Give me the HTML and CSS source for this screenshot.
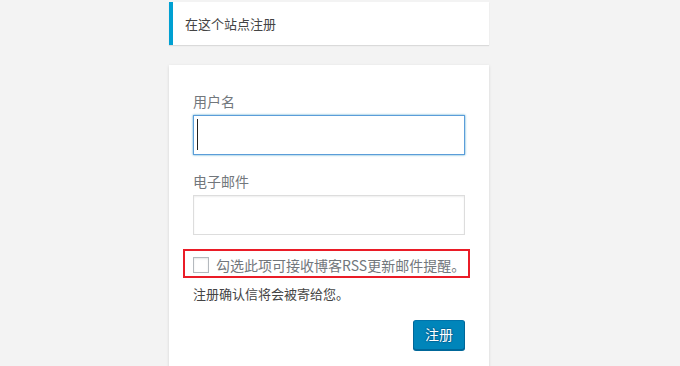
FILE: index.html
```html
<!DOCTYPE html>
<html lang="zh-CN">
<head>
<meta charset="utf-8">
<title>注册</title>
<link rel="stylesheet" href="styles.css">
</head>
<body>
<div class="login">
  <p class="message">在这个站点注册</p>
  <form class="register-form" action="#" onsubmit="return false">
    <div class="field">
      <label class="field-label" for="user_login">用户名</label>
      <div class="input-wrap">
        <input type="text" id="user_login" class="input input-focus">
        <span class="caret"></span>
      </div>
    </div>
    <div class="field">
      <label class="field-label" for="user_email">电子邮件</label>
      <div class="input-wrap">
        <input type="email" id="user_email" class="input">
      </div>
    </div>
    <div class="subscribe">
      <span class="check"></span>
      <span class="subscribe-text">勾选此项可接收博客RSS更新邮件提醒。</span>
      <span class="highlight"></span>
    </div>
    <p class="passmail">注册确认信将会被寄给您。</p>
    <div class="submit">
      <button type="button" class="button">注册</button>
    </div>
  </form>
</div>
</body>
</html>
```

FILE: styles.css
```css
* { box-sizing: border-box; }

body {
  margin: 0;
  background: #f3f3f3;
  font-family: "Noto Sans CJK SC", "Noto Sans", sans-serif;
  color: #444;
}

.login {
  width: 320px;
  margin-left: 169px;
  padding-top: 2px;
}

.message {
  margin: 0;
  padding: 12px;
  background: #fff;
  border-left: 4px solid #00a0d2;
  box-shadow: 0 1px 1px 0 rgba(0, 0, 0, 0.1);
  font-size: 13px;
  line-height: 19px;
  color: #444;
}

.register-form {
  margin: 20px 0 0;
  padding: 26px 24px 46px;
  background: #fff;
  box-shadow: 0 1px 3px rgba(0, 0, 0, 0.13);
}

.field {
  margin-bottom: 16px;
}

.field-label {
  display: block;
  font-size: 14px;
  line-height: 21px;
  color: #72777c;
}

.input-wrap {
  position: relative;
  margin-top: 3px;
}

.input {
  display: block;
  width: 100%;
  height: 40px;
  margin: 0;
  padding: 3px;
  font-size: 24px;
  border: 1px solid #ddd;
  background: #fff;
  box-shadow: inset 0 1px 2px rgba(0, 0, 0, 0.07);
  outline: none;
  color: #32373c;
  font-family: inherit;
}

.input-focus {
  border-color: #5b9dd9;
  background: #fff;
  box-shadow: 0 0 2px rgba(30, 140, 190, 0.8);
}

.caret {
  position: absolute;
  left: 4px;
  top: 4px;
  width: 1px;
  height: 31px;
  background: #222;
}

.subscribe {
  position: relative;
  display: flex;
  align-items: center;
  height: 28px;
}

.check {
  width: 16px;
  height: 16px;
  margin-right: 7px;
  border: 1px solid #b4b9be;
  background: #fff;
  box-shadow: inset 0 1px 2px rgba(0, 0, 0, 0.1);
  flex: none;
}

.subscribe-text {
  font-size: 14px;
  line-height: 20px;
  color: #72777c;
  white-space: nowrap;
}

.highlight {
  position: absolute;
  left: -10px;
  right: -5px;
  top: -2px;
  bottom: 1px;
  border: 2px solid #ea1c27;
  pointer-events: none;
}

.passmail {
  margin: 5px 0 0;
  font-size: 13px;
  line-height: 19px;
  color: #444;
}

.submit {
  display: flex;
  justify-content: flex-end;
  margin-top: 17px;
}

.button {
  height: 30px;
  margin: 0;
  padding: 0 11px 2px;
  font-family: inherit;
  font-size: 14px;
  line-height: 26px;
  color: #fff;
  background: #0085ba;
  border: 1px solid;
  border-color: #0073aa #006799 #006799;
  border-radius: 3px;
  box-shadow: 0 1px 0 #006799;
  text-shadow: 0 -1px 1px #006799, 1px 0 1px #006799, 0 1px 1px #006799, -1px 0 1px #006799;
  cursor: pointer;
}
```
